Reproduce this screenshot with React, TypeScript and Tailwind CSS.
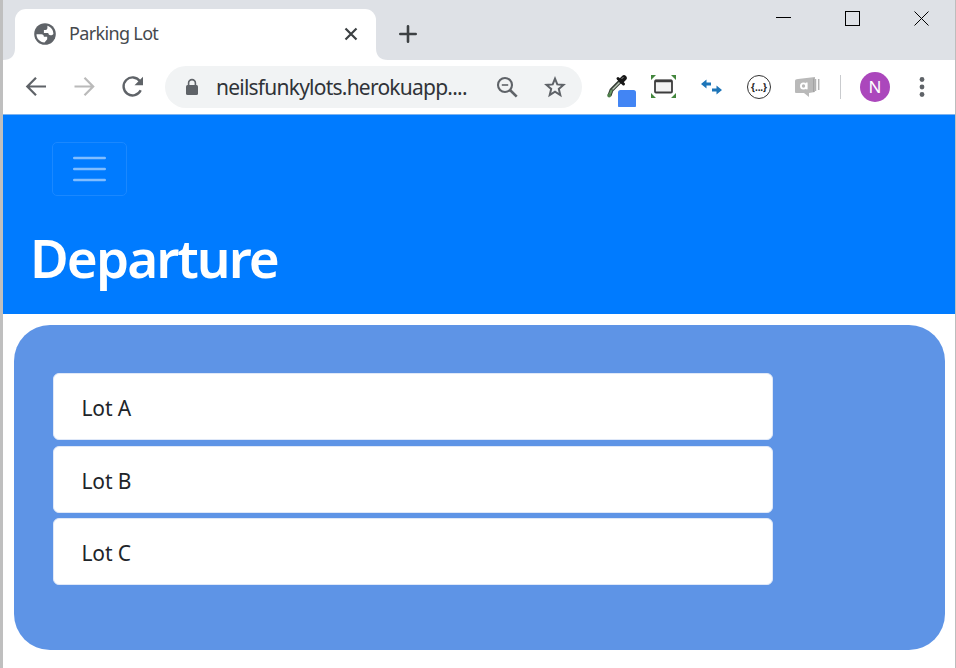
import React from "react";

const lots = ["Lot A", "Lot B", "Lot C"];

function Globe() {
  return (
    <svg className="mb-[2px] ml-[19px] h-[22px] w-[22px]" viewBox="0 0 22 22">
      <circle cx="11" cy="11" r="10.8" fill="#5f6368" />
      <path d="M2.500 11.200H7.500C9 11.200 9.900 12.300 9.900 13.800H13.200V16.200L10.500 19.400C5.800 19.200 2.400 15.400 2.500 11.200Z" fill="#fff" />
      <path d="M13.400 2.800C16.800 3.800 19.400 7 19.400 11C18.800 12 17.800 12.300 16.600 12.300C14.900 12.300 14.300 11.200 14.300 10H9.900V7H11.500C12.700 7 13.300 6.200 13.400 5Z" fill="#fff" />
    </svg>
  );
}

function TabStrip() {
  return (
    <div className="flex h-[60px] bg-[#dee1e6]">
      <svg className="h-[60px] w-3 shrink-0" viewBox="0 0 12 60">
        <path d="M12 60H0Q12 60 12 48Z" fill="#fff" />
      </svg>
      <div className="mt-[9px] flex h-[51px] w-[361px] shrink-0 items-center rounded-t-[11px] bg-white">
        <Globe />
        <span className="mb-[3px] ml-[13px] text-[18px] leading-6 tracking-[-0.65px] text-[#45494d]">Parking Lot</span>
        <svg className="mr-[18px] mb-[2px] ml-auto h-[14px] w-[14px]" viewBox="0 0 14 14" stroke="#3c4043" strokeWidth="2.2">
          <path d="M1.500 1.500L12.500 12.500M12.500 1.500L1.500 12.500" />
        </svg>
      </div>
      <svg className="h-[60px] w-3 shrink-0" viewBox="0 0 12 60">
        <path d="M0 60H12Q0 60 0 48Z" fill="#fff" />
      </svg>
      <svg className="mt-[25px] ml-[11px] h-[18px] w-[18px]" viewBox="0 0 18 18" stroke="#3c4043" strokeWidth="2.600" strokeLinecap="round">
        <path d="M9 1.300V16.700M1.300 9H16.700" />
      </svg>
      <svg className="mt-[10px] mr-[25px] ml-auto h-4 w-[154px]" viewBox="0 0 154 16" fill="none" stroke="#000" shapeRendering="crispEdges">
        <path d="M0 7.500H15" />
        <rect x="69.500" y="1.500" width="14" height="14" />
        <path d="M138.500 1.500L152.500 15.500M152.500 1.500L138.500 15.500" shapeRendering="auto" />
      </svg>
    </div>
  );
}

function Toolbar() {
  return (
    <div className="flex h-[54px] items-center bg-white">
      <svg className="ml-[22px] h-6 w-[120px] shrink-0" viewBox="0 0 120 24" fill="none" strokeWidth="2.200">
        <path d="M21 11.500H2.500M11 2.700L2.300 11.500L11 20.300" stroke="#5f6368" />
        <path d="M49.500 11.500H68M59.500 2.700L68.200 11.500L59.500 20.300" stroke="#bababa" />
        <path d="M115 6.300A9 9 0 1 0 115.700 15.300" stroke="#5f6368" strokeWidth="2.400" />
        <path d="M118 1.700V10.200H109.500Z" fill="#5f6368" />
      </svg>
      <div className="ml-5 flex h-[42px] w-[417px] shrink-0 items-center rounded-full bg-[#f1f3f4]">
        <svg className="ml-5 h-[18px] w-[14px]" viewBox="0 0 14 18" fill="none">
          <rect x="1" y="7" width="12" height="10" rx="1.500" fill="#5f6368" />
          <path d="M3.600 8V5A3.400 3.400 0 0 1 10.400 5V8" stroke="#5f6368" strokeWidth="1.600" />
        </svg>
        <span className="ml-[17px] w-[280px] text-[21px] leading-7 tracking-[-0.77px] whitespace-nowrap text-[#303338]">neilsfunkylots.herokuapp....</span>
        <svg className="h-[22px] w-[22px] shrink-0" viewBox="0 0 22 22" fill="none" stroke="#5f6368" strokeWidth="2.100">
          <circle cx="9" cy="9" r="7" />
          <path d="M14 14L20.700 20.700" strokeWidth="2.600" />
          <path d="M5.800 9H12.200" strokeWidth="1.600" />
        </svg>
        <svg className="ml-[26px] h-[22px] w-[22px] shrink-0" viewBox="0 0 22 22" fill="none" stroke="#5f6368" strokeWidth="2">
          <path d="M11 2.700L13.300 8.400L19.500 8.900L14.800 12.900L16.300 19L11 15.700L5.700 19L7.200 12.900L2.500 8.900L8.700 8.400Z" />
        </svg>
      </div>
      <svg className="ml-[25px] h-10 w-[30px] shrink-0" viewBox="0 0 30 40">
        <path d="M13.500 14L4.500 23L2.500 28.500" stroke="#353c35" strokeWidth="4" fill="none" />
        <path d="M13 15L5.500 22.500" stroke="#b9c6b5" strokeWidth="1.500" />
        <path d="M4.500 23.500L2.500 28" stroke="#6a9965" strokeWidth="2" strokeLinecap="round" />
        <circle cx="2.200" cy="28.500" r="1.900" fill="#4d7f49" />
        <path d="M11 11.500L16.500 17" stroke="#171717" strokeWidth="3" strokeLinecap="round" />
        <path d="M14.500 13.500L17 11" stroke="#171717" strokeWidth="5.500" strokeLinecap="round" />
        <path d="M14.500 12L16.500 10" stroke="#8b8b8b" strokeWidth="1" />
        <rect x="11" y="23" width="18" height="18" rx="2.500" fill="#4285f4" />
      </svg>
      <svg className="ml-[14px] h-[25px] w-[25px] shrink-0" viewBox="0 0 25 25">
        <path d="M0 0H5L0 5ZM25 0H20L25 5ZM0 23H5L0 18ZM25 23H20L25 18Z" fill="#43863d" />
        <rect x="4" y="5.500" width="17" height="12" rx="1" fill="#f2f2f2" stroke="#3c3c3c" strokeWidth="1.800" />
        <path d="M4 6H21" stroke="#3c3c3c" strokeWidth="2.500" />
      </svg>
      <svg className="ml-[25px] h-4 w-[21px] shrink-0" viewBox="0 0 21 16" fill="#1d75b8">
        <path d="M0 5L5.500 .5V3.400H10V6.600H5.500V9.500ZM21 11L15.500 6.500V9.400H11V12.600H15.500V15.500Z" />
      </svg>
      <div className="ml-[25px] flex h-6 w-6 shrink-0 items-center justify-center rounded-full border-[1.5px] border-[#333]">
        <span className="text-[10px] leading-3 font-bold tracking-[-0.1px] text-[#222]">{"{...}"}</span>
      </div>
      <svg className="ml-6 h-6 w-[25px] shrink-0" viewBox="0 0 25 24">
        <path d="M3 4L20 2V17L14 18V22L9 18H1Q0 18 0 17V6Q0 4 3 4Z" fill="#b9b9b9" />
        <path d="M20.500 4V16M23.700 4V15" stroke="#b3b3b3" strokeWidth="1.500" />
        <path d="M18.500 3.500V17" stroke="#a3a3a3" />
        <circle cx="8.500" cy="11" r="2.600" fill="none" stroke="#fff" strokeWidth="1.800" />
        <path d="M11.700 7.500V14.300" stroke="#fff" strokeWidth="1.800" />
      </svg>
      <div className="ml-5 h-6 w-px shrink-0 bg-[#c9cbce]" />
      <div className="ml-[19px] flex h-[30px] w-[30px] shrink-0 items-center justify-center rounded-full bg-[#ab47bc] text-[17px] text-white">N</div>
      <svg className="ml-[29px] h-5 w-[6px] shrink-0" viewBox="0 0 6 20" fill="#5f6368">
        <circle cx="3" cy="2.500" r="2.400" />
        <circle cx="3" cy="10" r="2.400" />
        <circle cx="3" cy="17.500" r="2.400" />
      </svg>
    </div>
  );
}

export default function App() {
  return (
    <div className="flex h-[668px] w-[956px] flex-col overflow-hidden border-r border-l-[3px] border-r-[#bdbdbd] border-l-[#bfbfbf] bg-white font-['Noto_Sans','Open_Sans',sans-serif]">
      <TabStrip />
      <Toolbar />
      <header className="h-[200px] shrink-0 border-t border-[#7db3ef] bg-[#007bff] pt-[27px]">
        <button className="ml-[49px] flex h-[54px] w-[75px] items-center justify-center rounded-[5px] border border-[#1a88ff]">
          <svg className="h-[26px] w-[33px]" viewBox="0 0 33 26" stroke="#80bdff" strokeWidth="2.600" strokeLinecap="round">
            <path d="M1.300 2H31.700M1.300 13H31.700M1.300 24H31.700" />
          </svg>
        </button>
        <h1 className="mt-[26px] ml-[27px] text-[53px] leading-[72px] font-semibold tracking-[-1.95px] text-white">Departure</h1>
      </header>
      <main className="mt-[11px] ml-[11px] h-[325px] w-[931px] shrink-0 rounded-[36px] bg-[#5e94e6] pt-12 pl-[39px]">
        <ul className="flex w-[720px] flex-col gap-[5.6px]">
          {lots.map((lot) => (
            <li key={lot} className="flex h-[67px] items-center rounded-[6px] border border-[#dfe8f8] bg-white pl-[27.5px] text-[21px] leading-8 tracking-[-0.15px] text-[#212529]">
              <span className="mt-[3px]">{lot}</span>
            </li>
          ))}
        </ul>
      </main>
    </div>
  );
}
